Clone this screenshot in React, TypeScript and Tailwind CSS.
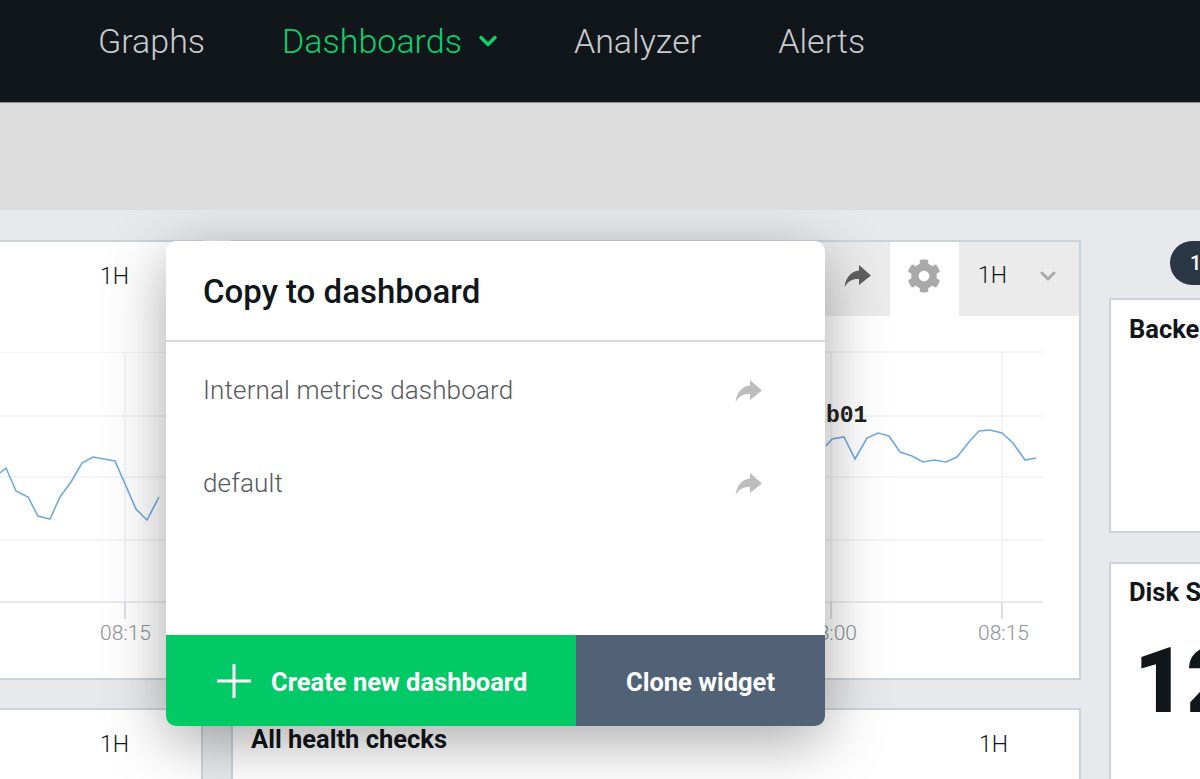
import { ChevronDown } from 'lucide-react';
import { FaCog } from 'react-icons/fa';

const leftLine = '0,473 6,468 16,491 28,497 38,516 50,519 60,497 71,482 82,463 93,457 115,461 136,509 147,520 159,497';
const midLine = '826,446 832,439 844,437 855,459 867,438 878,433 889,436 900,452 912,456 923,462 934,460 946,462 957,457 969,442 979,431 990,430 1002,433 1013,443 1025,460 1036,458';

const ShareIcon = ({ className }: { className: string }) => (
  <svg viewBox="0 0 28 24" className={className} fill="currentColor">
    <path d="M15 1 L27 11.5 L15 21 L15 15 C9 14.5 4 17 0.5 23 C2 13 7 7.5 15 6.5 Z" />
  </svg>
);

// coordinates in these charts are page pixels, the viewBox shifts them into the panel
function Chart({ x0, y0, width, x2, line, gridX }: { x0: number; y0: number; width: number; x2: number; line: string; gridX: number[] }) {
  const height = 640 - y0;
  return (
    <svg width={width} height={height} viewBox={`${x0} ${y0} ${width} ${height}`} className="block">
      {[352, 416, 477, 540, 602].map((y) => (
        <line key={y} x1={x0} x2={x2} y1={y} y2={y} stroke={y === 602 ? '#e2e4e8' : '#f0f1f3'} strokeWidth="1.5" />
      ))}
      {gridX.map((x) => (
        <g key={x}>
          <line x1={x} x2={x} y1={352} y2={602} stroke="#f0f1f3" strokeWidth="1.5" />
          <line x1={x} x2={x} y1={602} y2={619} stroke="#c3cad3" strokeWidth="1.2" />
        </g>
      ))}
      <polyline points={line} fill="none" stroke="#6fa9e2" strokeWidth="1.6" />
    </svg>
  );
}

export default function App() {
  return (
    <div className="relative h-[779px] w-[1200px] overflow-hidden bg-[#e7e9ec] font-['Roboto',sans-serif]">
      <nav className="relative z-20 flex h-[103px] items-center gap-[77px] border-b border-[#8d9196] bg-[#11161a] pb-[20px] pl-[98px] text-[34px] font-light text-[#c8cbce]">
        <span>Graphs</span>
        <span className="-mr-[5px] flex items-center gap-[12px] text-[#0cd06c]">
          Dashboards
          <ChevronDown className="h-7 w-7" strokeWidth={3} />
        </span>
        <span>Analyzer</span>
        <span>Alerts</span>
      </nav>
      <div className="relative z-20 h-[107px] bg-[#dcdcdc]" />

      <div className="flex gap-[28px] pt-[30px]">
        <div className="flex w-[203px] flex-col gap-[28px]">
          <section className="relative h-[440px] border-2 border-l-0 border-[#ccd3da] bg-white">
            <div className="h-[110px] pl-[100px] pt-[18px] text-[23px] font-light text-[#11161a]">1H</div>
            <Chart x0={0} y0={352} width={201} x2={201} line={leftLine} gridX={[125]} />
            <span className="absolute left-[100px] top-[376px] text-[21px] font-light text-[#8f9296]">08:15</span>
          </section>
          <section className="h-[100px] border-2 border-l-0 border-[#ccd3da] bg-white pl-[100px] pt-[18px] text-[23px] font-light text-[#11161a]">1H</section>
        </div>

        <div className="flex w-[850px] flex-col gap-[28px]">
          <section className="relative h-[440px] border-2 border-[#ccd3da] bg-white">
            <div className="flex h-[74px] justify-end">
              <div className="flex w-[120px] items-center justify-end bg-[#ebebeb] pb-[6px] pr-[18px] text-[#5f5f5f]">
                <ShareIcon className="h-[24px] w-[28px]" />
              </div>
              <div className="flex w-[69px] items-center justify-center bg-white pb-[6px] pr-[2px] text-[#a9a9a9]">
                <FaCog size={34} />
              </div>
              <div className="flex w-[120px] items-center justify-between bg-[#ebebeb] pb-[6px] pl-[19px] pr-[19px] text-[23px] font-light text-[#11161a]">
                1H
                <ChevronDown className="h-6 w-6 text-[#a9a9a9]" strokeWidth={3} />
              </div>
            </div>
            <Chart x0={233} y0={316} width={846} x2={1043} line={midLine} gridX={[831, 1002]} />
            <span className="absolute left-[593px] top-[157px] font-['Liberation_Mono',monospace] text-[23px] font-bold text-[#222]">b01</span>
            <span className="absolute left-[573px] top-[376px] text-[21px] font-light text-[#8f9296]">08:00</span>
            <span className="absolute left-[745px] top-[376px] text-[21px] font-light text-[#8f9296]">08:15</span>
          </section>
          <section className="flex h-[100px] justify-between border-2 border-[#ccd3da] bg-white pl-[18px] pt-[10px] text-[#11161a]">
            <span className="text-[25.5px] font-bold">All health checks</span>
            <span className="mr-[71px] mt-[8px] text-[23px] font-light">1H</span>
          </section>
        </div>

        <div className="relative flex w-[120px] flex-col gap-[29px] pt-[58px]">
          <span className="absolute left-[61px] top-[1px] flex h-[44px] w-[60px] items-center rounded-l-full bg-[#2b3744] pl-[20px] text-[20px] font-medium text-white">1</span>
          <section className="h-[235px] overflow-hidden border-2 border-r-0 border-[#ccd3da] bg-white pl-[18px] pt-[10px] text-[25.5px] font-bold whitespace-nowrap text-[#11161a]">Backend</section>
          <section className="h-[230px] overflow-hidden border-2 border-r-0 border-[#ccd3da] bg-white pl-[18px] pt-[9px] whitespace-nowrap text-[#11161a]">
            <div className="text-[25.5px] font-bold">Disk Space</div>
            <div className="mt-[26px] ml-[5px] text-[90px] font-black leading-none">12</div>
          </section>
        </div>
      </div>

      <div className="absolute left-[166px] top-[241px] z-10 flex h-[485px] w-[659px] flex-col overflow-hidden rounded-[10px] bg-white shadow-[0_15px_60px_rgba(0,0,0,0.34)]">
        <div className="flex h-[101px] items-center border-b-2 border-[#d5d7da] pl-[37px] pt-[2px] text-[33px] font-medium text-[#11161a]">Copy to dashboard</div>
        <ul className="flex-1 pt-[2px] text-[26px] font-light tracking-[0.15px] text-[#55585c]">
          {['Internal metrics dashboard', 'default'].map((name) => (
            <li key={name} className="flex h-[93px] items-center justify-between pl-[37px] pr-[62px]">
              {name}
              <ShareIcon className="h-[24px] w-[28px] text-[#bdbdbd]" />
            </li>
          ))}
        </ul>
        <div className="flex h-[91px] text-[25.5px] font-bold text-white">
          <button className="flex w-[410px] items-center gap-[20px] bg-[#00c965] pl-[51px]">
            <svg width="34" height="34" viewBox="0 0 34 34" stroke="currentColor" strokeWidth="3"><path d="M17 0V34M0 17H34" /></svg>
            <span className="pt-[3px]">Create new dashboard</span>
          </button>
          <button className="flex-1 bg-[#526276] pt-[3px]">Clone widget</button>
        </div>
      </div>
    </div>
  );
}
